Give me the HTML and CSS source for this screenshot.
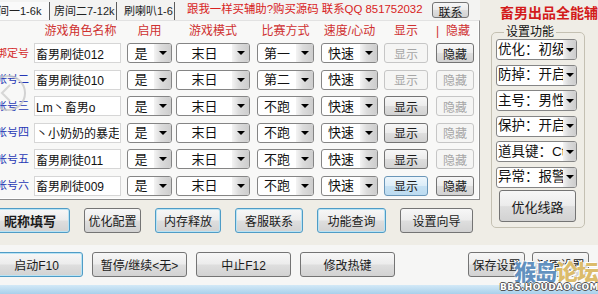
FILE: index.html
```html
<!DOCTYPE html>
<html lang="zh-CN">
<head>
    <meta charset="UTF-8">
    <title>畜男出品全能辅助</title>
    <link rel="stylesheet" href="styles.css">
</head>
<body>
<div class="window">
    <div class="top">
        <div class="main">
            <!-- tabs + notice -->
            <div class="tabbar">
                <div class="tab tab-first tab-active">房间一1-6k</div>
                <div class="tab tab-second">房间二7-12k</div>
                <div class="tab tab-third">刷喇叭1-6</div>
                <div class="notice">跟我一样买辅助?购买源码 联系QQ 851752032</div>
                <button class="btn btn-contact">联系</button>
            </div>

            <!-- account table -->
            <div class="panel">
                <div class="grid head">
                    <span></span>
                    <span class="c-name head-name">游戏角色名称</span>
                    <span class="c-on">启用</span>
                    <span class="c-mode">游戏模式</span>
                    <span class="c-race">比赛方式</span>
                    <span class="c-speed">速度/心动</span>
                    <span class="c-show">显示</span>
                    <span class="c-hide head-hide"><i>|</i><b>隐藏</b></span>
                </div>
                <div class="rows">
                    <div class="grid">
                        <div class="acct acct-main"><span>绑定号</span></div>
                        <input class="name c-name" type="text" value="畜男刷徒012">
                        <div class="combo c-on"><span class="combo-text">是</span><span class="combo-arrow"></span></div>
                        <div class="combo c-mode"><span class="combo-text">末日</span><span class="combo-arrow"></span></div>
                        <div class="combo c-race"><span class="combo-text">第一</span><span class="combo-arrow"></span></div>
                        <div class="combo c-speed"><span class="combo-text">快速</span><span class="combo-arrow"></span></div>
                        <button class="btn btn-row c-show" disabled>显示</button>
                        <button class="btn btn-row c-hide">隐藏</button>
                    </div>
                    <div class="grid">
                        <div class="acct"><span>帐号二</span></div>
                        <input class="name c-name" type="text" value="畜男刷徒010">
                        <div class="combo c-on"><span class="combo-text">是</span><span class="combo-arrow"></span></div>
                        <div class="combo c-mode"><span class="combo-text">末日</span><span class="combo-arrow"></span></div>
                        <div class="combo c-race"><span class="combo-text">第二</span><span class="combo-arrow"></span></div>
                        <div class="combo c-speed"><span class="combo-text">快速</span><span class="combo-arrow"></span></div>
                        <button class="btn btn-row c-show" disabled>显示</button>
                        <button class="btn btn-row c-hide" disabled>隐藏</button>
                    </div>
                    <div class="grid">
                        <div class="acct"><span>帐号三</span></div>
                        <input class="name c-name" type="text" value="Lm丶畜男o">
                        <div class="combo c-on"><span class="combo-text">是</span><span class="combo-arrow"></span></div>
                        <div class="combo c-mode"><span class="combo-text">末日</span><span class="combo-arrow"></span></div>
                        <div class="combo c-race"><span class="combo-text">不跑</span><span class="combo-arrow"></span></div>
                        <div class="combo c-speed"><span class="combo-text">快速</span><span class="combo-arrow"></span></div>
                        <button class="btn btn-row c-show">显示</button>
                        <button class="btn btn-row c-hide" disabled>隐藏</button>
                    </div>
                    <div class="grid">
                        <div class="acct"><span>帐号四</span></div>
                        <input class="name c-name" type="text" value="丶小奶奶的暴走">
                        <div class="combo c-on"><span class="combo-text">是</span><span class="combo-arrow"></span></div>
                        <div class="combo c-mode"><span class="combo-text">末日</span><span class="combo-arrow"></span></div>
                        <div class="combo c-race"><span class="combo-text">不跑</span><span class="combo-arrow"></span></div>
                        <div class="combo c-speed"><span class="combo-text">快速</span><span class="combo-arrow"></span></div>
                        <button class="btn btn-row c-show">显示</button>
                        <button class="btn btn-row c-hide" disabled>隐藏</button>
                    </div>
                    <div class="grid">
                        <div class="acct"><span>帐号五</span></div>
                        <input class="name c-name" type="text" value="畜男刷徒011">
                        <div class="combo c-on"><span class="combo-text">是</span><span class="combo-arrow"></span></div>
                        <div class="combo c-mode"><span class="combo-text">末日</span><span class="combo-arrow"></span></div>
                        <div class="combo c-race"><span class="combo-text">不跑</span><span class="combo-arrow"></span></div>
                        <div class="combo c-speed"><span class="combo-text">快速</span><span class="combo-arrow"></span></div>
                        <button class="btn btn-row c-show">显示</button>
                        <button class="btn btn-row c-hide" disabled>隐藏</button>
                    </div>
                    <div class="grid">
                        <div class="acct"><span>帐号六</span></div>
                        <input class="name c-name" type="text" value="畜男刷徒009">
                        <div class="combo c-on"><span class="combo-text">是</span><span class="combo-arrow"></span></div>
                        <div class="combo c-mode"><span class="combo-text">末日</span><span class="combo-arrow"></span></div>
                        <div class="combo c-race"><span class="combo-text">不跑</span><span class="combo-arrow"></span></div>
                        <div class="combo c-speed"><span class="combo-text">快速</span><span class="combo-arrow"></span></div>
                        <button class="btn btn-row btn-hover c-show">显示</button>
                        <button class="btn btn-row c-hide">隐藏</button>
                    </div>
                </div>
            </div>

            <!-- tool buttons -->
            <div class="tools">
                <button class="btn btn-hot btn-bold tool-nick">昵称填写</button>
                <button class="btn tool-opt">优化配置</button>
                <button class="btn btn-hot tool-mem">内存释放</button>
                <button class="btn btn-hot tool-kf">客服联系</button>
                <button class="btn btn-hot tool-func">功能查询</button>
                <button class="btn tool-wiz">设置向导</button>
            </div>
        </div>

        <!-- settings column -->
        <div class="side">
            <div class="brand">畜男出品全能辅</div>
            <fieldset class="group">
                <legend>设置功能</legend>
                <div class="combo combo-side"><span class="combo-text">优化：初级</span><span class="combo-arrow"></span></div>
                <div class="combo combo-side"><span class="combo-text">防掉：开启</span><span class="combo-arrow"></span></div>
                <div class="combo combo-side"><span class="combo-text">主号：男性</span><span class="combo-arrow"></span></div>
                <div class="combo combo-side"><span class="combo-text">保护：开启</span><span class="combo-arrow"></span></div>
                <div class="combo combo-side"><span class="combo-text">道具键：Ctrl</span><span class="combo-arrow"></span></div>
                <div class="combo combo-side"><span class="combo-text">异常：报警</span><span class="combo-arrow"></span></div>
                <button class="btn btn-route">优化线路</button>
            </fieldset>
        </div>
    </div>

    <!-- run controls -->
    <div class="bottom">
        <button class="btn btn-hot btn-start">启动F10</button>
        <button class="btn btn-wide">暂停/继续&lt;无&gt;</button>
        <button class="btn btn-wide">中止F12</button>
        <button class="btn btn-wide">修改热键</button>
        <button class="btn btn-save">保存设置</button>
        <button class="btn btn-restore">还原设置</button>
    </div>
    <div class="strip"></div>

    <!-- faint watermark circle -->
    <svg class="wm-circle" width="40" height="40" viewBox="0 0 40 40">
        <circle cx="20" cy="20" r="17" fill="none" stroke="#c9c9c9" stroke-width="2"/>
        <path d="M22 12 L14 20 L22 28" fill="none" stroke="#cfcfcf" stroke-width="2"/>
    </svg>

    <!-- forum watermark -->
    <div class="watermark">
        <div class="wm-title"><span class="wm-blue">猴岛</span><span class="wm-gold">论坛</span></div>
        <div class="wm-url">BBS.HOUDAO.COM</div>
    </div>
</div>
</body>
</html>
```

FILE: styles.css
```css
* {
    box-sizing: border-box;
}
html, body {
    margin: 0;
    padding: 0;
}
body {
    width: 598px;
    height: 294px;
    overflow: hidden;
    font-family: "Liberation Sans", "Noto Sans CJK SC", sans-serif;
    font-size: 12px;
    line-height: 1;
    color: #111;
    background: #f6f6f5;
}
.window {
    position: relative;
    width: 598px;
    height: 294px;
    overflow: hidden;
}
.top {
    display: flex;
    height: 245px;
    background: #efede6;
}
.main {
    width: 480px;
    flex-shrink: 0;
}

/* tabs */
.tabbar {
    display: flex;
    align-items: center;
    height: 20px;
    background: #f3f3f2;
}
.tab {
    height: 18px;
    margin-top: 2px;
    display: flex;
    align-items: center;
    font-size: 11px;
    color: #222;
    white-space: nowrap;
    border-right: 1px solid #5c5c5c;
}
.tab-first {
    width: 64px;
    margin-left: -14px;
    padding-left: 1px;
    background: #fafafa;
}
.tab-second {
    width: 67px;
    padding-left: 4px;
}
.tab-third {
    width: 58px;
    padding-left: 7px;
}
.notice {
    width: 245px;
    margin-left: 12px;
    color: #d82222;
    font-size: 11.4px;
    white-space: nowrap;
}
.btn-contact {
    width: 37px;
    height: 16px;
    font-size: 12px;
    border-color: #444;
    background: linear-gradient(#fff, #f0f0f0 50%, #e2e2e2);
}

/* table panel */
.panel {
    height: 180px;
    padding-top: 2px;
    background: #f8f8f7;
    border-top: 1px solid #e2e2e2;
    border-right: 1px solid #8d8d8d;
    border-bottom: 1px solid #8d8d8d;
    box-shadow: inset -1px -1px 0 #fff;
}
.grid {
    display: grid;
    grid-template-columns: 34px 93px 49px 81px 64px 63px 52px 38px;
    align-items: center;
    height: 20px;
}
.head {
    height: 16px;
    margin-bottom: 4px;
    color: #cf3030;
    font-size: 12px;
}
.head span {
    text-align: center;
    white-space: nowrap;
}
.head .head-name {
    padding-left: 6px;
}
.head .head-hide {
    display: flex;
    justify-content: space-between;
    padding-right: 4px;
}
.head-hide i, .head-hide b {
    font-style: normal;
    font-weight: normal;
}
.rows {
    display: flex;
    flex-direction: column;
    gap: 6.6px;
}
.c-name { width: 87px; }
.c-on { width: 45px; }
.c-mode { width: 74px; }
.c-race { width: 57px; }
.c-speed { width: 57px; }
.c-show { width: 44px; }
.c-hide { width: 38px; }

.acct {
    display: flex;
    justify-content: flex-end;
    width: 29px;
    overflow: hidden;
    white-space: nowrap;
    font-size: 11px;
    color: #2637b5;
}
.acct span {
    flex-shrink: 0;
}
.acct-main {
    color: #d42a2a;
}
.name {
    height: 20px;
    margin: 0;
    padding: 0 1px;
    border: 1px solid #d6d6d6;
    background: #fff;
    font-family: "Liberation Sans", "Noto Sans CJK SC", sans-serif;
    font-size: 12px;
    color: #111;
    outline: none;
}

/* drop down boxes */
.combo {
    display: flex;
    align-items: stretch;
    height: 20px;
    border: 1px solid #858585;
    border-radius: 3px;
    background: #fff;
    overflow: hidden;
}
.combo-text {
    flex: 1;
    display: flex;
    align-items: center;
    justify-content: center;
    font-size: 13px;
    white-space: nowrap;
    overflow: hidden;
}
.combo-arrow {
    width: 17px;
    flex-shrink: 0;
    display: flex;
    align-items: center;
    justify-content: center;
    background: linear-gradient(to right, #f4f4f4, #dcdcdc 40%, #cdcdcd);
}
.combo-arrow::after {
    content: "";
    border-left: 4px solid transparent;
    border-right: 4px solid transparent;
    border-top: 4px solid #000;
}

/* buttons */
.btn {
    margin: 0;
    padding: 0;
    font-family: "Liberation Sans", "Noto Sans CJK SC", sans-serif;
    font-size: 12px;
    color: #1a1a1a;
    border: 1px solid #747474;
    border-radius: 3px;
    background: linear-gradient(#f7f7f7, #ececec 48%, #dedede 52%, #d2d2d2);
    white-space: nowrap;
}
.btn:disabled {
    color: #a6a6a6;
    border-color: #c6c6c6;
    background: #f5f5f4;
}
.btn-row {
    height: 20px;
}
.btn-hover {
    border-color: #6a96b8;
    background: linear-gradient(#edf6fc, #dcedf8 48%, #c6e1f3 52%, #bcdbf0);
}
.btn-hot {
    border-color: #4f9cc6;
    box-shadow: inset 0 0 0 1px #b9e3f4;
}
.btn-bold {
    font-weight: bold;
    font-size: 13px;
}

.tools {
    display: flex;
    justify-content: space-between;
    width: 473px;
    padding-top: 8px;
}
.tools .btn {
    height: 25px;
}
.tool-nick { width: 80px; margin-left: -10px; }
.tool-opt { width: 57px; }
.tool-mem { width: 66px; }
.tool-kf { width: 68px; }
.tool-func { width: 69px; }
.tool-wiz { width: 73px; }

/* settings column */
.side {
    width: 118px;
    padding-top: 6px;
}
.brand {
    margin-left: 20px;
    height: 14px;
    font-size: 14px;
    line-height: 14px;
    font-weight: bold;
    color: #d31b1b;
    white-space: nowrap;
}
.group {
    min-width: 0;
    width: 94px;
    margin: 6px 0 0 11px;
    padding: 1px 0 5px 4px;
    border: 1px solid #c4c0b2;
    border-radius: 5px;
}
.group legend {
    margin-left: 8px;
    padding: 0 2px;
    font-size: 12px;
    line-height: 12px;
    color: #111;
}
.combo-side {
    width: 81px;
    height: 21px;
    margin-bottom: 4.5px;
}
.combo-side .combo-text {
    justify-content: flex-start;
    padding-left: 1px;
    font-size: 13.5px;
}
.combo-side .combo-arrow {
    width: 13px;
}
.btn-route {
    width: 77px;
    height: 32px;
    margin: -2px 0 0 3px;
    font-size: 13px;
}

/* bottom bar */
.bottom {
    display: flex;
    gap: 9px;
    height: 40px;
    padding: 7px 9px 0 0;
    background: #f6f6f5;
}
.bottom .btn {
    height: 25px;
}
.btn-start {
    width: 93px;
    margin-left: -10px;
}
.btn-wide {
    width: 95px;
}
.btn-save {
    width: 57px;
    margin-left: auto;
    margin-right: -2px;
}
.btn-restore {
    width: 57px;
}
.strip {
    height: 9px;
    background: linear-gradient(#d3e9f7, #a8d0eb);
}

/* watermarks laid over the window */
.wm-circle {
    position: absolute;
    left: -12px;
    top: 73px;
    opacity: 0.8;
}
.watermark {
    position: absolute;
    right: 0;
    bottom: 2px;
    width: 98px;
    text-align: right;
}
.wm-title {
    font-family: "Noto Sans CJK SC", sans-serif;
    font-size: 22px;
    line-height: 24px;
    font-weight: 900;
    letter-spacing: -1px;
    text-shadow: 1px 1px 0 #fff, -1px -1px 0 #fff;
}
.wm-blue {
    color: rgba(70, 125, 180, 0.85);
}
.wm-gold {
    color: rgba(214, 176, 80, 0.85);
}
.wm-url {
    font-family: "DejaVu Sans", sans-serif;
    font-size: 9px;
    line-height: 10px;
    font-weight: bold;
    letter-spacing: 0.3px;
    color: #fff;
    text-shadow: 1px 0 0 #555, -1px 0 0 #555, 0 1px 0 #555, 0 -1px 0 #555;
}
```
